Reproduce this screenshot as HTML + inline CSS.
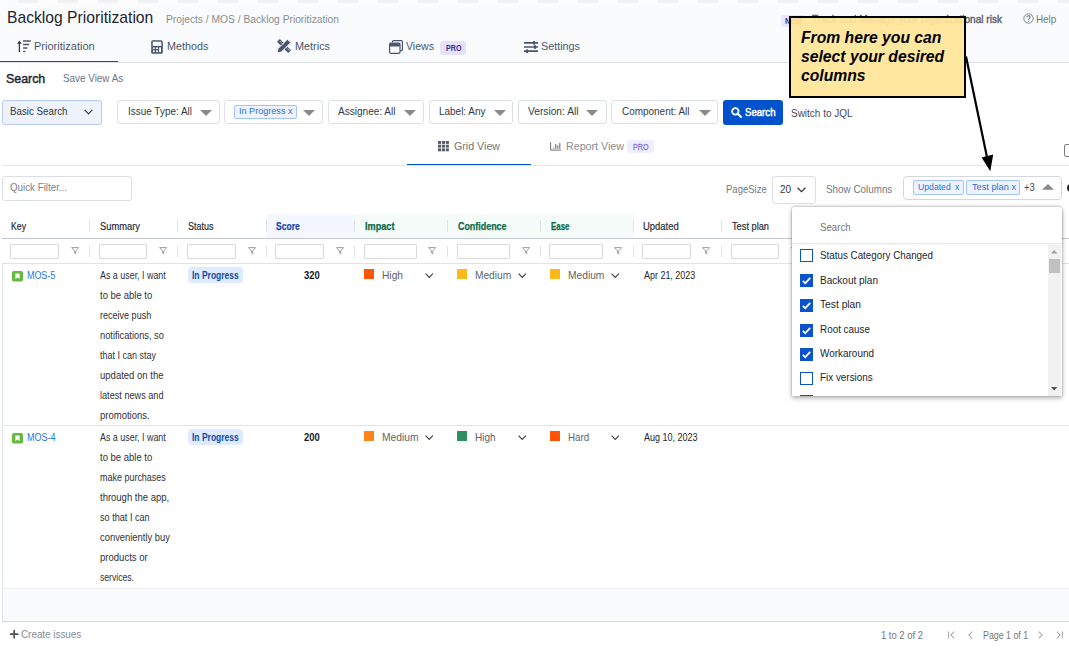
<!DOCTYPE html>
<html lang="en"><head><meta charset="utf-8"><title>Backlog Prioritization</title>
<style>
html,body{margin:0;padding:0;background:#fff;}
body{width:1069px;height:648px;overflow:hidden;font-family:"Liberation Sans",sans-serif;}
#page{position:relative;width:1069px;height:648px;overflow:hidden;background:#fff;}
.a{position:absolute;}
svg.a{overflow:visible;}
.t{position:absolute;white-space:nowrap;line-height:1;transform-origin:0 0;display:block;}
#drop{position:absolute;left:0;top:0;}
#call{position:absolute;left:0;top:0;}
i.bp{display:inline-block;width:0;height:0;vertical-align:baseline;}

</style></head>
<body>
<div id="page">
<div class="a" style="left:0px;top:0px;width:1069px;height:62px;background:#fafbfc;"></div>
<div class="a" style="left:0px;top:0px;width:1069px;height:2.6px;background:transparent;background:repeating-linear-gradient(90deg,#fdfdfd 0,#fdfdfd 18px,#f0f1f3 18px,#f0f1f3 38px,#fdfdfd 38px,#fdfdfd 40px);"></div>
<div class="a" style="left:0px;top:62px;width:1069px;height:1px;background:#dfe1e6;"></div>
<div class="a" style="left:0px;top:60.7px;width:118px;height:1.3px;background:#0052cc;"></div>
<div class="a" style="left:781px;top:14.5px;width:25px;height:12.5px;background:#eae6ff;border-radius:3px;"></div>
<svg class="a" style="left:1023px;top:13px" width="11" height="11" viewBox="0 0 11 11"><circle cx="5.5" cy="5.5" r="4.7" fill="none" stroke="#6b778c" stroke-width="0.9"/><path d="M3.9 4.3 a1.6 1.5 0 1 1 2.3 1.3 c-0.5 0.3 -0.7 0.5 -0.7 1.1" fill="none" stroke="#6b778c" stroke-width="1.1"/><circle cx="5.5" cy="8.1" r="0.55" fill="#6b778c"/></svg>
<svg class="a" style="left:17px;top:40px" width="14" height="13" viewBox="0 0 14 13"><path d="M2.4 12.2V2" fill="none" stroke="#333c4e" stroke-width="1.3"/><path d="M0 3.7 L2.4 0.5 L4.8 3.7 Z" fill="#333c4e"/><path d="M6.1 1H13.8M6.1 4.5H12.2M6.1 8H10.3M6.1 11.3H8.4" stroke="#4a566d" stroke-width="1.3"/></svg>
<svg class="a" style="left:151px;top:39.5px" width="12" height="14" viewBox="0 0 12 14"><rect x="0.2" y="0.2" width="11.6" height="13.6" rx="1.6" fill="#4a566d"/><rect x="1.7" y="1.7" width="8.6" height="4.2" fill="#fafbfc"/><g fill="#fafbfc"><rect x="1.9" y="7.4" width="1.9" height="1.7"/><rect x="5" y="7.4" width="1.9" height="1.7"/><rect x="8.1" y="7.4" width="1.9" height="4.7"/><rect x="1.9" y="10.4" width="1.9" height="1.7"/><rect x="5" y="10.4" width="1.9" height="1.7"/></g></svg>
<svg class="a" style="left:277.3px;top:39px" width="14" height="14" viewBox="0 0 14 14"><path d="M2.8 0 L14 11.2 L11.2 14 L0 2.8 Z" fill="#4a566d"/><path d="M10.4 0.2 L13.8 3.6 L4.4 13 L0 14 L1 9.6 Z" fill="#4a566d" stroke="#fafbfc" stroke-width="1"/><path d="M3 2.2l1.2 1.2M5 4.2l1.2 1.2M9 8.2l1.2 1.2M11 10.2l1.2 1.2" stroke="#fafbfc" stroke-width="0.9"/></svg>
<svg class="a" style="left:389px;top:39.5px" width="14" height="14" viewBox="0 0 14 14"><path d="M3.4 2.6 V1.8 a1.2 1.2 0 0 1 1.2 -1.2 H12.2 a1.2 1.2 0 0 1 1.2 1.2 V9.4 a1.2 1.2 0 0 1 -1.2 1.2 H11.2" fill="none" stroke="#4a566d" stroke-width="1.2"/><rect x="0.6" y="3.2" width="10.4" height="10.2" rx="1.3" fill="#fafbfc" stroke="#4a566d" stroke-width="1.2"/><rect x="0.6" y="3.2" width="10.4" height="3.2" rx="1" fill="#4a566d"/></svg>
<div class="a" style="left:440px;top:41px;width:26px;height:13.5px;background:#e6e1fb;border-radius:3px;"></div>
<svg class="a" style="left:524px;top:40.5px" width="14" height="12" viewBox="0 0 14 12"><path d="M0 1.8H14M0 6H14M0 10.2H14" stroke="#4a566d" stroke-width="1.7"/><rect x="9" y="0" width="2" height="3.6" fill="#4a566d"/><rect x="10" y="4.2" width="2" height="3.6" fill="#4a566d"/><rect x="2" y="8.4" width="2" height="3.6" fill="#4a566d"/></svg>
<div class="a" style="left:1.5px;top:100px;width:100.5px;height:24.5px;background:#edf2fd;border:1px solid #b5cbf3;box-sizing:border-box;border-radius:3px;"></div>
<svg class="a" style="left:84px;top:109.2px" width="9" height="6" viewBox="0 0 9 6"><path d="M0.7 0.8 L4.5 4.8 L8.3 0.8" fill="none" stroke="#3a3f48" stroke-width="1.2"/></svg>
<div class="a" style="left:117px;top:100px;width:103px;height:24px;background:#fff;border:1px solid #dcdfe5;box-sizing:border-box;border-radius:3px;"></div>
<svg class="a" style="left:200px;top:110px" width="12" height="6" viewBox="0 0 12 6"><path d="M0 0H12L6 6Z" fill="#8a8a8a"/></svg>
<div class="a" style="left:224px;top:100px;width:99px;height:24px;background:#fff;border:1px solid #dcdfe5;box-sizing:border-box;border-radius:3px;"></div>
<svg class="a" style="left:303.3px;top:110px" width="12" height="6" viewBox="0 0 12 6"><path d="M0 0H12L6 6Z" fill="#8a8a8a"/></svg>
<div class="a" style="left:328px;top:100px;width:96px;height:24px;background:#fff;border:1px solid #dcdfe5;box-sizing:border-box;border-radius:3px;"></div>
<svg class="a" style="left:404px;top:110px" width="12" height="6" viewBox="0 0 12 6"><path d="M0 0H12L6 6Z" fill="#8a8a8a"/></svg>
<div class="a" style="left:429px;top:100px;width:84px;height:24px;background:#fff;border:1px solid #dcdfe5;box-sizing:border-box;border-radius:3px;"></div>
<svg class="a" style="left:494px;top:110px" width="12" height="6" viewBox="0 0 12 6"><path d="M0 0H12L6 6Z" fill="#8a8a8a"/></svg>
<div class="a" style="left:518px;top:100px;width:89px;height:24px;background:#fff;border:1px solid #dcdfe5;box-sizing:border-box;border-radius:3px;"></div>
<svg class="a" style="left:586px;top:110px" width="12" height="6" viewBox="0 0 12 6"><path d="M0 0H12L6 6Z" fill="#8a8a8a"/></svg>
<div class="a" style="left:611px;top:100px;width:106.5px;height:24px;background:#fff;border:1px solid #dcdfe5;box-sizing:border-box;border-radius:3px;"></div>
<svg class="a" style="left:699px;top:110px" width="12" height="6" viewBox="0 0 12 6"><path d="M0 0H12L6 6Z" fill="#8a8a8a"/></svg>
<div class="a" style="left:234px;top:105px;width:63px;height:13.5px;background:#edf3fe;border:1px solid #a3c4f8;box-sizing:border-box;border-radius:2px;"></div>
<div class="a" style="left:723px;top:100px;width:60px;height:24.5px;background:#0052cc;border-radius:3px;"></div>
<svg class="a" style="left:731.2px;top:107.2px" width="10.8" height="10.8" viewBox="0 0 10 10"><circle cx="4" cy="4" r="3" fill="none" stroke="#fff" stroke-width="1.7"/><path d="M6.3 6.3 L9.3 9.3" stroke="#fff" stroke-width="1.9" stroke-linecap="round"/></svg>
<div class="a" style="left:2px;top:165px;width:1067px;height:1px;background:#e4e5e8;"></div>
<div class="a" style="left:407px;top:163.7px;width:124px;height:1.3px;background:#0052cc;"></div>
<svg class="a" style="left:438px;top:140.75px" width="11" height="10.5" viewBox="0 0 11 10.5"><rect x="0.0" y="0.0" width="3.1" height="2.9" fill="#555c68"/><rect x="3.9" y="0.0" width="3.1" height="2.9" fill="#555c68"/><rect x="7.8" y="0.0" width="3.1" height="2.9" fill="#555c68"/><rect x="0.0" y="3.7" width="3.1" height="2.9" fill="#555c68"/><rect x="3.9" y="3.7" width="3.1" height="2.9" fill="#555c68"/><rect x="7.8" y="3.7" width="3.1" height="2.9" fill="#555c68"/><rect x="0.0" y="7.4" width="3.1" height="2.9" fill="#555c68"/><rect x="3.9" y="7.4" width="3.1" height="2.9" fill="#555c68"/><rect x="7.8" y="7.4" width="3.1" height="2.9" fill="#555c68"/></svg>
<svg class="a" style="left:549.5px;top:141.5px" width="12" height="10" viewBox="0 0 12 10"><path d="M0.6 0.2V8.1H11" fill="none" stroke="#6d6f74" stroke-width="1"/><path d="M3.8 6.8V5.6M5.8 6.8V2.1M7.8 6.8V3.6M9.8 6.8V1.1" stroke="#6d6f74" stroke-width="1.1"/></svg>
<div class="a" style="left:627px;top:140px;width:26.5px;height:13px;background:#f0edfd;border-radius:3px;"></div>
<div class="a" style="left:1063.7px;top:143.8px;width:16.3px;height:13.2px;background:#fdfdfd;border:1.5px solid #7d7d7d;box-sizing:border-box;border-radius:2px;"></div>
<svg class="a" style="left:1066.5px;top:184px" width="8" height="8" viewBox="0 0 8 8"><circle cx="4" cy="4" r="4" fill="#222"/></svg>
<div class="a" style="left:1.6px;top:176.2px;width:130.7px;height:24.6px;background:#fff;border:1px solid #dcdfe5;box-sizing:border-box;border-radius:3px;"></div>
<div class="a" style="left:772.2px;top:176px;width:43.6px;height:27.6px;background:#fff;border:1px solid #dcdfe5;box-sizing:border-box;border-radius:3px;"></div>
<svg class="a" style="left:797.1px;top:187.2px" width="9" height="5.6" viewBox="0 0 9 5.6"><path d="M0.6 0.7 L4.5 4.6 L8.4 0.7" fill="none" stroke="#33373f" stroke-width="1.25"/></svg>
<div class="a" style="left:903px;top:176px;width:159px;height:23.75px;background:#fff;border:1px solid #d3d7df;box-sizing:border-box;border-radius:4px;"></div>
<div class="a" style="left:913.1px;top:180px;width:50.9px;height:14.6px;background:#edf3fe;border:1px solid #a3c4f8;box-sizing:border-box;border-radius:2px;"></div>
<div class="a" style="left:966.2px;top:180px;width:53.8px;height:14.6px;background:#edf3fe;border:1px solid #a3c4f8;box-sizing:border-box;border-radius:2px;"></div>
<svg class="a" style="left:1041.7px;top:184.3px" width="12" height="5.8" viewBox="0 0 12 5.8"><path d="M0 5.8H12L6 0Z" fill="#8a8a8a"/></svg>
<div class="a" style="left:2px;top:263px;width:1px;height:358px;background:#dde2eb;"></div>
<div class="a" style="left:266.75px;top:213.75px;width:88.25px;height:24.25px;background:#f4f7fe;"></div>
<div class="a" style="left:355px;top:213.75px;width:278.5px;height:24.25px;background:#f4fbf8;"></div>
<div class="a" style="left:2px;top:238px;width:1067px;height:1px;background:#c2c7ce;"></div>
<div class="a" style="left:2px;top:263.2px;width:1067px;height:1px;background:#dde2eb;"></div>
<div class="a" style="left:2px;top:425.3px;width:1067px;height:1px;background:#dde2eb;"></div>
<div class="a" style="left:2px;top:588px;width:1067px;height:1px;background:#eceef2;"></div>
<div class="a" style="left:3px;top:589px;width:1066px;height:32px;background:#fafbfd;"></div>
<div class="a" style="left:2px;top:621px;width:1067px;height:1px;background:#d5d9df;"></div>
<div class="a" style="left:89px;top:219.5px;width:1px;height:12.5px;background:#dde2eb;"></div>
<div class="a" style="left:89px;top:245.5px;width:1px;height:11.25px;background:#dde2eb;"></div>
<div class="a" style="left:177.25px;top:219.5px;width:1px;height:12.5px;background:#dde2eb;"></div>
<div class="a" style="left:177.25px;top:245.5px;width:1px;height:11.25px;background:#dde2eb;"></div>
<div class="a" style="left:265.5px;top:219.5px;width:1px;height:12.5px;background:#dde2eb;"></div>
<div class="a" style="left:265.5px;top:245.5px;width:1px;height:11.25px;background:#dde2eb;"></div>
<div class="a" style="left:354px;top:219.5px;width:1px;height:12.5px;background:#dde2eb;"></div>
<div class="a" style="left:354px;top:245.5px;width:1px;height:11.25px;background:#dde2eb;"></div>
<div class="a" style="left:447px;top:219.5px;width:1px;height:12.5px;background:#dde2eb;"></div>
<div class="a" style="left:447px;top:245.5px;width:1px;height:11.25px;background:#dde2eb;"></div>
<div class="a" style="left:540px;top:219.5px;width:1px;height:12.5px;background:#dde2eb;"></div>
<div class="a" style="left:540px;top:245.5px;width:1px;height:11.25px;background:#dde2eb;"></div>
<div class="a" style="left:633.25px;top:219.5px;width:1px;height:12.5px;background:#dde2eb;"></div>
<div class="a" style="left:633.25px;top:245.5px;width:1px;height:11.25px;background:#dde2eb;"></div>
<div class="a" style="left:721.25px;top:219.5px;width:1px;height:12.5px;background:#dde2eb;"></div>
<div class="a" style="left:721.25px;top:245.5px;width:1px;height:11.25px;background:#dde2eb;"></div>
<div class="a" style="left:10.3px;top:243.6px;width:48.45px;height:15px;background:#fff;border:1px solid #d8dade;box-sizing:border-box;border-radius:1px;"></div>
<svg class="a" style="left:70.5px;top:247.1px" width="8.2" height="7.6" viewBox="0 0 8.2 7.6"><path d="M0.6 0.6H7.6L4.75 3.9V6.9L3.45 5.9V3.9Z" fill="none" stroke="#8b8e94" stroke-width="0.85" stroke-linejoin="round"/></svg>
<div class="a" style="left:99px;top:243.6px;width:48px;height:15px;background:#fff;border:1px solid #d8dade;box-sizing:border-box;border-radius:1px;"></div>
<svg class="a" style="left:159px;top:247.1px" width="8.2" height="7.6" viewBox="0 0 8.2 7.6"><path d="M0.6 0.6H7.6L4.75 3.9V6.9L3.45 5.9V3.9Z" fill="none" stroke="#8b8e94" stroke-width="0.85" stroke-linejoin="round"/></svg>
<div class="a" style="left:187.2px;top:243.6px;width:48.55px;height:15px;background:#fff;border:1px solid #d8dade;box-sizing:border-box;border-radius:1px;"></div>
<svg class="a" style="left:247.5px;top:247.1px" width="8.2" height="7.6" viewBox="0 0 8.2 7.6"><path d="M0.6 0.6H7.6L4.75 3.9V6.9L3.45 5.9V3.9Z" fill="none" stroke="#8b8e94" stroke-width="0.85" stroke-linejoin="round"/></svg>
<div class="a" style="left:275.2px;top:243.6px;width:48.55px;height:15px;background:#fff;border:1px solid #d8dade;box-sizing:border-box;border-radius:1px;"></div>
<svg class="a" style="left:335.5px;top:247.1px" width="8.2" height="7.6" viewBox="0 0 8.2 7.6"><path d="M0.6 0.6H7.6L4.75 3.9V6.9L3.45 5.9V3.9Z" fill="none" stroke="#8b8e94" stroke-width="0.85" stroke-linejoin="round"/></svg>
<div class="a" style="left:363.5px;top:243.6px;width:53.5px;height:15px;background:#fff;border:1px solid #d8dade;box-sizing:border-box;border-radius:1px;"></div>
<svg class="a" style="left:428px;top:247.1px" width="8.2" height="7.6" viewBox="0 0 8.2 7.6"><path d="M0.6 0.6H7.6L4.75 3.9V6.9L3.45 5.9V3.9Z" fill="none" stroke="#8b8e94" stroke-width="0.85" stroke-linejoin="round"/></svg>
<div class="a" style="left:456.5px;top:243.6px;width:53.5px;height:15px;background:#fff;border:1px solid #d8dade;box-sizing:border-box;border-radius:1px;"></div>
<svg class="a" style="left:521.5px;top:247.1px" width="8.2" height="7.6" viewBox="0 0 8.2 7.6"><path d="M0.6 0.6H7.6L4.75 3.9V6.9L3.45 5.9V3.9Z" fill="none" stroke="#8b8e94" stroke-width="0.85" stroke-linejoin="round"/></svg>
<div class="a" style="left:549px;top:243.6px;width:53.5px;height:15px;background:#fff;border:1px solid #d8dade;box-sizing:border-box;border-radius:1px;"></div>
<svg class="a" style="left:614.25px;top:247.1px" width="8.2" height="7.6" viewBox="0 0 8.2 7.6"><path d="M0.6 0.6H7.6L4.75 3.9V6.9L3.45 5.9V3.9Z" fill="none" stroke="#8b8e94" stroke-width="0.85" stroke-linejoin="round"/></svg>
<div class="a" style="left:642.2px;top:243.6px;width:48.55px;height:15px;background:#fff;border:1px solid #d8dade;box-sizing:border-box;border-radius:1px;"></div>
<svg class="a" style="left:702px;top:247.1px" width="8.2" height="7.6" viewBox="0 0 8.2 7.6"><path d="M0.6 0.6H7.6L4.75 3.9V6.9L3.45 5.9V3.9Z" fill="none" stroke="#8b8e94" stroke-width="0.85" stroke-linejoin="round"/></svg>
<div class="a" style="left:731px;top:243.6px;width:47.75px;height:15px;background:#fff;border:1px solid #d8dade;box-sizing:border-box;border-radius:1px;"></div>
<svg class="a" style="left:790.5px;top:247.1px" width="8.2" height="7.6" viewBox="0 0 8.2 7.6"><path d="M0.6 0.6H7.6L4.75 3.9V6.9L3.45 5.9V3.9Z" fill="none" stroke="#8b8e94" stroke-width="0.85" stroke-linejoin="round"/></svg>
<svg class="a" style="left:12px;top:270.75px" width="11" height="10.5" viewBox="0 0 11 10.5"><rect width="11" height="10.5" rx="1.8" fill="#63ba3c"/><path d="M3.4 2.4H7.6V8.2L5.5 6.4L3.4 8.2Z" fill="#fff"/></svg>
<div class="a" style="left:188px;top:267px;width:54.5px;height:16px;background:#deebff;border-radius:4px;"></div>
<div class="a" style="left:364.2px;top:269.1px;width:9.8px;height:9.6px;background:#ff5500;"></div>
<svg class="a" style="left:425.3px;top:272.7px" width="8.5" height="5.4" viewBox="0 0 8.5 5.4"><path d="M0.6 0.6 L4.25 4.4 L7.9 0.6" fill="none" stroke="#3c4046" stroke-width="1.1"/></svg>
<div class="a" style="left:457.4px;top:269.1px;width:9.8px;height:9.6px;background:#ffb81a;"></div>
<svg class="a" style="left:517.6px;top:272.7px" width="8.5" height="5.4" viewBox="0 0 8.5 5.4"><path d="M0.6 0.6 L4.25 4.4 L7.9 0.6" fill="none" stroke="#3c4046" stroke-width="1.1"/></svg>
<div class="a" style="left:550.4px;top:269.1px;width:9.8px;height:9.6px;background:#ffb81a;"></div>
<svg class="a" style="left:610.5px;top:272.7px" width="8.5" height="5.4" viewBox="0 0 8.5 5.4"><path d="M0.6 0.6 L4.25 4.4 L7.9 0.6" fill="none" stroke="#3c4046" stroke-width="1.1"/></svg>
<svg class="a" style="left:12px;top:433.0px" width="11" height="10.5" viewBox="0 0 11 10.5"><rect width="11" height="10.5" rx="1.8" fill="#63ba3c"/><path d="M3.4 2.4H7.6V8.2L5.5 6.4L3.4 8.2Z" fill="#fff"/></svg>
<div class="a" style="left:188px;top:429.25px;width:54.5px;height:16px;background:#deebff;border-radius:4px;"></div>
<div class="a" style="left:364.2px;top:431.35px;width:9.8px;height:9.6px;background:#ff851a;"></div>
<svg class="a" style="left:425.3px;top:434.95px" width="8.5" height="5.4" viewBox="0 0 8.5 5.4"><path d="M0.6 0.6 L4.25 4.4 L7.9 0.6" fill="none" stroke="#3c4046" stroke-width="1.1"/></svg>
<div class="a" style="left:457.4px;top:431.35px;width:9.8px;height:9.6px;background:#2c915f;"></div>
<svg class="a" style="left:517.6px;top:434.95px" width="8.5" height="5.4" viewBox="0 0 8.5 5.4"><path d="M0.6 0.6 L4.25 4.4 L7.9 0.6" fill="none" stroke="#3c4046" stroke-width="1.1"/></svg>
<div class="a" style="left:550.4px;top:431.35px;width:9.8px;height:9.6px;background:#ff5500;"></div>
<svg class="a" style="left:610.5px;top:434.95px" width="8.5" height="5.4" viewBox="0 0 8.5 5.4"><path d="M0.6 0.6 L4.25 4.4 L7.9 0.6" fill="none" stroke="#3c4046" stroke-width="1.1"/></svg>
<svg class="a" style="left:10px;top:630.4px" width="8.4" height="8.4" viewBox="0 0 8.4 8.4"><path d="M4.2 0V8.4M0 4.2H8.4" stroke="#4d525b" stroke-width="1.7"/></svg>
<svg class="a" style="left:947.6px;top:630.5px" width="7" height="8" viewBox="0 0 7 8"><path d="M0.6 0.4V7.6M6.2 0.6L2.8 4L6.2 7.4" fill="none" stroke="#aaadb3" stroke-width="1.1"/></svg>
<svg class="a" style="left:968px;top:630.5px" width="5" height="8" viewBox="0 0 5 8"><path d="M4.2 0.6L0.8 4L4.2 7.4" fill="none" stroke="#aaadb3" stroke-width="1.1"/></svg>
<svg class="a" style="left:1038px;top:630.5px" width="5" height="8" viewBox="0 0 5 8"><path d="M0.8 0.6L4.2 4L0.8 7.4" fill="none" stroke="#aaadb3" stroke-width="1.1"/></svg>
<svg class="a" style="left:1055.5px;top:630.5px" width="7" height="8" viewBox="0 0 7 8"><path d="M6.4 0.4V7.6M0.8 0.6L4.2 4L0.8 7.4" fill="none" stroke="#aaadb3" stroke-width="1.1"/></svg>
<span class="t" id="t0" style="left:6.7px;top:9.00px;font-size:17px;color:#1f2430;transform:scaleX(0.9216);">Backlog Prioritization</span>
<span class="t" id="t1" style="left:165.7px;top:14.00px;font-size:10.5px;color:#8a8c91;transform:scaleX(0.9752);">Projects / MOS / Backlog Prioritization</span>
<span class="t" id="t2" style="left:785px;top:17.00px;font-size:8.5px;color:#403294;font-weight:700;transform:scaleX(0.8567);">NEW</span>
<span class="t" id="t3" style="left:812px;top:14.00px;font-size:10.5px;color:#5a606c;transform:scaleX(0.9594);-webkit-text-stroke:0.4px #5a606c;">Track and Manage your organizational risk</span>
<span class="t" id="t4" style="left:1035.7px;top:14.00px;font-size:10.5px;color:#737a88;transform:scaleX(0.9394);">Help</span>
<span class="t" id="t5" style="left:34.2px;top:41.00px;font-size:11.5px;color:#4a566d;transform:scaleX(0.9592);">Prioritization</span>
<span class="t" id="t6" style="left:166.5px;top:41.00px;font-size:11.5px;color:#4a566d;transform:scaleX(0.9408);">Methods</span>
<span class="t" id="t7" style="left:295px;top:41.00px;font-size:11.5px;color:#4a566d;transform:scaleX(0.9444);">Metrics</span>
<span class="t" id="t8" style="left:406px;top:41.00px;font-size:11.5px;color:#4a566d;transform:scaleX(0.9190);">Views</span>
<span class="t" id="t9" style="left:445.5px;top:44.00px;font-size:8.5px;color:#3b2f8f;font-weight:700;transform:scaleX(0.8414);">PRO</span>
<span class="t" id="t10" style="left:540.5px;top:41.00px;font-size:11.5px;color:#4a566d;transform:scaleX(0.9383);">Settings</span>
<span class="t" id="t11" style="left:6.3px;top:72.00px;font-size:13px;color:#22272f;transform:scaleX(0.9514);-webkit-text-stroke:0.45px #22272f;">Search</span>
<span class="t" id="t12" style="left:62.8px;top:73.00px;font-size:10.5px;color:#6b7485;transform:scaleX(0.9404);">Save View As</span>
<span class="t" id="t13" style="left:10px;top:106.00px;font-size:11px;color:#333a45;transform:scaleX(0.8872);">Basic Search</span>
<span class="t" id="t14" style="left:128px;top:106.00px;font-size:11px;color:#333a45;transform:scaleX(0.9048);">Issue Type: All</span>
<span class="t" id="t15" style="left:338px;top:106.00px;font-size:11px;color:#333a45;transform:scaleX(0.9129);">Assignee: All</span>
<span class="t" id="t16" style="left:439px;top:106.00px;font-size:11px;color:#333a45;transform:scaleX(0.9051);">Label: Any</span>
<span class="t" id="t17" style="left:528px;top:106.00px;font-size:11px;color:#333a45;transform:scaleX(0.9279);">Version: All</span>
<span class="t" id="t18" style="left:622px;top:106.00px;font-size:11px;color:#333a45;transform:scaleX(0.9047);">Component: All</span>
<span class="t" id="t19" style="left:239px;top:106.00px;font-size:9.5px;color:#2f6fd6;transform:scaleX(0.9559);">In Progress x</span>
<span class="t" id="t20" style="left:744.5px;top:107.00px;font-size:11px;color:#fff;transform:scaleX(0.8749);-webkit-text-stroke:0.5px #fff;">Search</span>
<span class="t" id="t21" style="left:791px;top:108.00px;font-size:10.5px;color:#444a55;transform:scaleX(0.9493);">Switch to JQL</span>
<span class="t" id="t22" style="left:454px;top:141.00px;font-size:11.5px;color:#727478;transform:scaleX(0.9267);">Grid View</span>
<span class="t" id="t23" style="left:566px;top:141.00px;font-size:11.5px;color:#8a8c90;transform:scaleX(0.9289);">Report View</span>
<span class="t" id="t24" style="left:632.5px;top:143.00px;font-size:8.5px;color:#8577d6;transform:scaleX(0.8414);-webkit-text-stroke:0.3px #8577d6;">PRO</span>
<span class="t" id="t25" style="left:10px;top:182.00px;font-size:11px;color:#7d8189;transform:scaleX(0.8880);">Quick Filter...</span>
<span class="t" id="t26" style="left:725.9px;top:184.00px;font-size:11px;color:#76787e;transform:scaleX(0.8642);">PageSize</span>
<span class="t" id="t27" style="left:780.4px;top:184.00px;font-size:11px;color:#333a45;transform:scaleX(0.9061);">20</span>
<span class="t" id="t28" style="left:826px;top:184.00px;font-size:11px;color:#76787e;transform:scaleX(0.8961);">Show Columns</span>
<span class="t" id="t29" style="left:917.5px;top:182.00px;font-size:9.5px;color:#2f6fd6;transform:scaleX(0.9114);word-spacing:2px;">Updated x</span>
<span class="t" id="t30" style="left:971.5px;top:182.00px;font-size:9.5px;color:#2f6fd6;transform:scaleX(0.9687);">Test plan x</span>
<span class="t" id="t31" style="left:1023.6px;top:182.00px;font-size:10.5px;color:#444a55;transform:scaleX(0.8928);">+3</span>
<span class="t" id="t32" style="left:11px;top:222.00px;font-size:10px;color:#2b2f36;transform:scaleX(0.8704);-webkit-text-stroke:0.2px #2b2f36;">Key</span>
<span class="t" id="t33" style="left:99.5px;top:222.00px;font-size:10px;color:#2b2f36;transform:scaleX(0.9346);-webkit-text-stroke:0.2px #2b2f36;">Summary</span>
<span class="t" id="t34" style="left:187.5px;top:222.00px;font-size:10px;color:#2b2f36;transform:scaleX(0.8992);-webkit-text-stroke:0.2px #2b2f36;">Status</span>
<span class="t" id="t35" style="left:275.75px;top:222.00px;font-size:10px;color:#1848ad;font-weight:700;transform:scaleX(0.8544);-webkit-text-stroke:0.25px #1848ad;">Score</span>
<span class="t" id="t36" style="left:364.5px;top:222.00px;font-size:10px;color:#0f6b49;font-weight:700;transform:scaleX(0.9152);-webkit-text-stroke:0.25px #0f6b49;">Impact</span>
<span class="t" id="t37" style="left:457.5px;top:222.00px;font-size:10px;color:#0f6b49;font-weight:700;transform:scaleX(0.8907);-webkit-text-stroke:0.25px #0f6b49;">Confidence</span>
<span class="t" id="t38" style="left:550.5px;top:222.00px;font-size:10px;color:#0f6b49;font-weight:700;transform:scaleX(0.7920);-webkit-text-stroke:0.25px #0f6b49;">Ease</span>
<span class="t" id="t39" style="left:643.25px;top:222.00px;font-size:10px;color:#2b2f36;transform:scaleX(0.9455);-webkit-text-stroke:0.2px #2b2f36;">Updated</span>
<span class="t" id="t40" style="left:731.75px;top:222.00px;font-size:10px;color:#2b2f36;transform:scaleX(0.9243);-webkit-text-stroke:0.2px #2b2f36;">Test plan</span>
<span class="t" id="t41" style="left:26.75px;top:271.00px;font-size:10px;color:#1c78e2;transform:scaleX(0.8920);">MOS-5</span>
<span class="t" id="t42" style="left:100px;top:271.00px;font-size:10px;color:#2e3238;transform:scaleX(0.8899);">As a user, I want</span>
<span class="t" id="t43" style="left:100px;top:291.00px;font-size:10px;color:#2e3238;transform:scaleX(0.9501);">to be able to</span>
<span class="t" id="t44" style="left:100px;top:311.00px;font-size:10px;color:#2e3238;transform:scaleX(0.9029);">receive push</span>
<span class="t" id="t45" style="left:100px;top:331.00px;font-size:10px;color:#2e3238;transform:scaleX(0.9269);">notifications, so</span>
<span class="t" id="t46" style="left:100px;top:351.00px;font-size:10px;color:#2e3238;transform:scaleX(0.8994);">that I can stay</span>
<span class="t" id="t47" style="left:100px;top:371.00px;font-size:10px;color:#2e3238;transform:scaleX(0.9515);">updated on the</span>
<span class="t" id="t48" style="left:100px;top:391.00px;font-size:10px;color:#2e3238;transform:scaleX(0.9137);">latest news and</span>
<span class="t" id="t49" style="left:100px;top:411.00px;font-size:10px;color:#2e3238;transform:scaleX(0.9512);">promotions.</span>
<span class="t" id="t50" style="left:192px;top:271.00px;font-size:10px;color:#0f4aa8;font-weight:700;transform:scaleX(0.8495);">In Progress</span>
<span class="t" id="t51" style="left:303.75px;top:271.00px;font-size:10px;color:#15181d;font-weight:700;transform:scaleX(0.9438);">320</span>
<span class="t" id="t52" style="left:381.5px;top:270.00px;font-size:11.5px;color:#626468;transform:scaleX(0.8877);">High</span>
<span class="t" id="t53" style="left:474.6px;top:270.00px;font-size:11.5px;color:#626468;transform:scaleX(0.8837);">Medium</span>
<span class="t" id="t54" style="left:567.6px;top:270.00px;font-size:11.5px;color:#626468;transform:scaleX(0.8898);">Medium</span>
<span class="t" id="t55" style="left:643.75px;top:271.00px;font-size:10px;color:#23272e;transform:scaleX(0.8950);">Apr 21, 2023</span>
<span class="t" id="t56" style="left:26.75px;top:433.00px;font-size:10px;color:#1c78e2;transform:scaleX(0.9014);">MOS-4</span>
<span class="t" id="t57" style="left:100px;top:433.00px;font-size:10px;color:#2e3238;transform:scaleX(0.8899);">As a user, I want</span>
<span class="t" id="t58" style="left:100px;top:453.00px;font-size:10px;color:#2e3238;transform:scaleX(0.9501);">to be able to</span>
<span class="t" id="t59" style="left:100px;top:473.00px;font-size:10px;color:#2e3238;transform:scaleX(0.8968);">make purchases</span>
<span class="t" id="t60" style="left:100px;top:493.00px;font-size:10px;color:#2e3238;transform:scaleX(0.9486);">through the app,</span>
<span class="t" id="t61" style="left:100px;top:513.00px;font-size:10px;color:#2e3238;transform:scaleX(0.9122);">so that I can</span>
<span class="t" id="t62" style="left:100px;top:533.00px;font-size:10px;color:#2e3238;transform:scaleX(0.9383);">conveniently buy</span>
<span class="t" id="t63" style="left:100px;top:553.00px;font-size:10px;color:#2e3238;transform:scaleX(0.9554);">products or</span>
<span class="t" id="t64" style="left:100px;top:573.00px;font-size:10px;color:#2e3238;transform:scaleX(0.8618);">services.</span>
<span class="t" id="t65" style="left:192px;top:433.00px;font-size:10px;color:#0f4aa8;font-weight:700;transform:scaleX(0.8495);">In Progress</span>
<span class="t" id="t66" style="left:303.75px;top:433.00px;font-size:10px;color:#15181d;font-weight:700;transform:scaleX(0.9438);">200</span>
<span class="t" id="t67" style="left:381.5px;top:432.00px;font-size:11.5px;color:#626468;transform:scaleX(0.8923);">Medium</span>
<span class="t" id="t68" style="left:474.6px;top:432.00px;font-size:11.5px;color:#626468;transform:scaleX(0.8750);">High</span>
<span class="t" id="t69" style="left:567.6px;top:432.00px;font-size:11.5px;color:#626468;transform:scaleX(0.8501);">Hard</span>
<span class="t" id="t70" style="left:643.75px;top:433.00px;font-size:10px;color:#23272e;transform:scaleX(0.9000);">Aug 10, 2023</span>
<span class="t" id="t71" style="left:21.25px;top:629.00px;font-size:11px;color:#858b96;transform:scaleX(0.8957);">Create issues</span>
<span class="t" id="t72" style="left:881px;top:631.00px;font-size:10px;color:#73757a;transform:scaleX(0.9442);">1 to 2 of 2</span>
<span class="t" id="t73" style="left:982.6px;top:631.00px;font-size:10px;color:#73757a;transform:scaleX(0.8816);">Page 1 of 1</span>
<div id="drop">
<div class="a" style="left:791.5px;top:207px;width:270.5px;height:189.4px;background:#fff;border-radius:3px 3px 0 0;box-shadow:0 2px 5px rgba(0,0,0,0.33),0 0 1px rgba(0,0,0,0.3),0 -1px 3px rgba(0,0,0,0.16);"></div>
<div class="a" style="left:791.5px;top:207px;width:270.5px;height:36.3px;background:#fff;border-radius:3px 3px 0 0;box-shadow:0 1px 2px rgba(0,0,0,0.12);"></div>
<div class="a" style="left:1048px;top:245px;width:13px;height:151px;background:#f1f1f1;"></div>
<svg class="a" style="left:1051.3px;top:250px" width="6.4" height="3.6" viewBox="0 0 6.4 3.6"><path d="M0 3.6H6.4L3.2 0Z" fill="#a3a3a3"/></svg>
<svg class="a" style="left:1051.3px;top:386.5px" width="6.4" height="3.6" viewBox="0 0 6.4 3.6"><path d="M0 0H6.4L3.2 3.6Z" fill="#505050"/></svg>
<div class="a" style="left:1049px;top:259px;width:11px;height:13.5px;background:#c1c1c1;"></div>
<div class="a" style="left:800px;top:249px;width:13px;height:13px;background:#fff;border:1.7px solid #0a53c9;box-sizing:border-box;"></div>
<div class="a" style="left:800px;top:274px;width:13px;height:13px;background:#0a53c9;"></div>
<svg class="a" style="left:800px;top:274px" width="13" height="13" viewBox="0 0 13 13"><path d="M2.8 6.8 L5.3 9.2 L10.2 3.9" fill="none" stroke="#fff" stroke-width="1.7"/></svg>
<div class="a" style="left:800px;top:298.5px;width:13px;height:13px;background:#0a53c9;"></div>
<svg class="a" style="left:800px;top:298.5px" width="13" height="13" viewBox="0 0 13 13"><path d="M2.8 6.8 L5.3 9.2 L10.2 3.9" fill="none" stroke="#fff" stroke-width="1.7"/></svg>
<div class="a" style="left:800px;top:324px;width:13px;height:13px;background:#0a53c9;"></div>
<svg class="a" style="left:800px;top:324px" width="13" height="13" viewBox="0 0 13 13"><path d="M2.8 6.8 L5.3 9.2 L10.2 3.9" fill="none" stroke="#fff" stroke-width="1.7"/></svg>
<div class="a" style="left:800px;top:347.5px;width:13px;height:13px;background:#0a53c9;"></div>
<svg class="a" style="left:800px;top:347.5px" width="13" height="13" viewBox="0 0 13 13"><path d="M2.8 6.8 L5.3 9.2 L10.2 3.9" fill="none" stroke="#fff" stroke-width="1.7"/></svg>
<div class="a" style="left:800px;top:371.6px;width:13px;height:13px;background:#fff;border:1.7px solid #0a53c9;box-sizing:border-box;"></div>
<div class="a" style="left:800px;top:395.3px;width:13px;height:0.7px;background:#0a53c9;"></div>
<span class="t" id="t74" style="left:820px;top:222.00px;font-size:11px;color:#747578;transform:scaleX(0.8778);">Search</span>
<span class="t" id="t75" style="left:820px;top:250.00px;font-size:11px;color:#22262d;transform:scaleX(0.8926);">Status Category Changed</span>
<span class="t" id="t76" style="left:820px;top:275.00px;font-size:11px;color:#22262d;transform:scaleX(0.9118);">Backout plan</span>
<span class="t" id="t77" style="left:820px;top:299.00px;font-size:11px;color:#22262d;transform:scaleX(0.9312);">Test plan</span>
<span class="t" id="t78" style="left:820px;top:324.00px;font-size:11px;color:#22262d;transform:scaleX(0.8984);">Root cause</span>
<span class="t" id="t79" style="left:820px;top:348.00px;font-size:11px;color:#22262d;transform:scaleX(0.9042);">Workaround</span>
<span class="t" id="t80" style="left:820px;top:372.00px;font-size:11px;color:#22262d;transform:scaleX(0.8980);">Fix versions</span>
</div>
<div id="call">
<svg class="a" style="left:0;top:0" width="1069" height="648" viewBox="0 0 1069 648"><path d="M966 56.5 L987.6 160" stroke="#000" stroke-width="2.2" fill="none"/><path d="M990.3 171.3 L981.6 157.4 L993.2 154.4 Z" fill="#000"/></svg>
<div class="a" style="left:788.8px;top:15.6px;width:177.6px;height:82.1px;background:rgba(255,229,153,0.93);border:2.2px solid #000;box-sizing:border-box;"></div>
<span class="t" id="t81" style="left:801.4px;top:30.00px;font-size:16px;color:#000;font-weight:700;font-style:italic;transform:scaleX(0.9807);">From here you can</span>
<span class="t" id="t82" style="left:801.4px;top:49.00px;font-size:16px;color:#000;font-weight:700;font-style:italic;transform:scaleX(0.9819);">select your desired</span>
<span class="t" id="t83" style="left:801.4px;top:68.00px;font-size:16px;color:#000;font-weight:700;font-style:italic;transform:scaleX(0.9818);">columns</span>
</div>
</div>
</body></html>
